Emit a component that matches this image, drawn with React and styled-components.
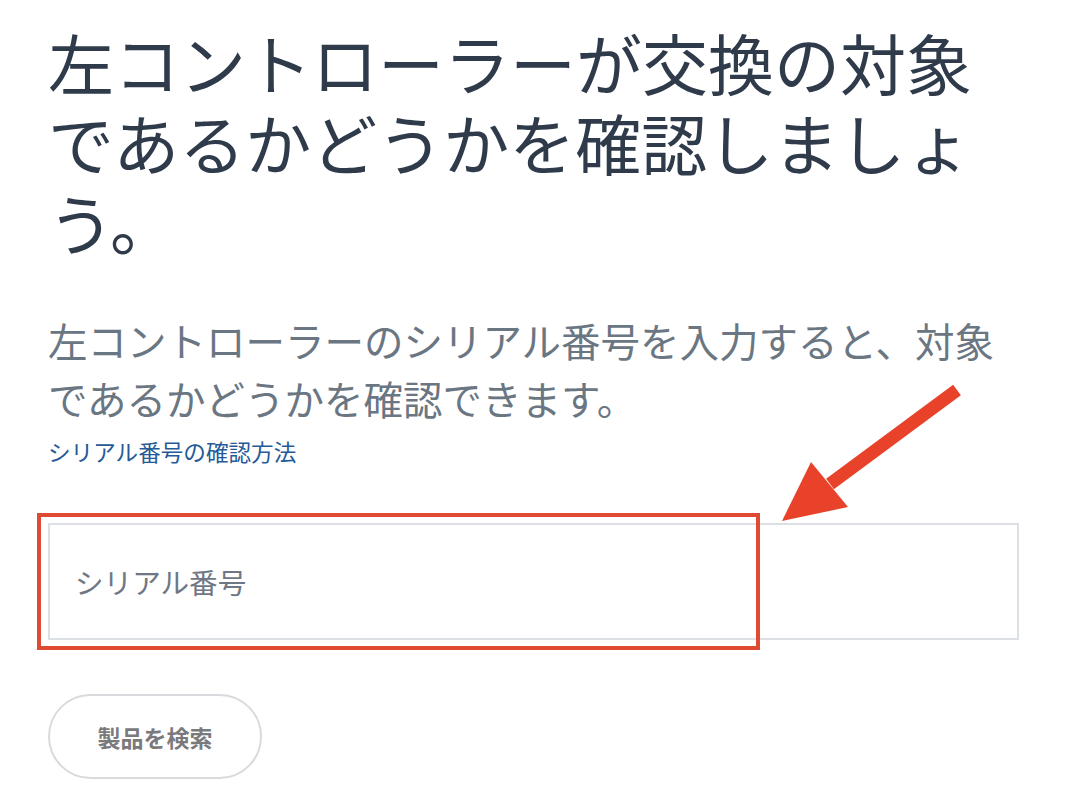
import styled, { createGlobalStyle } from 'styled-components';

const GlobalStyle = createGlobalStyle`
  html, body {
    margin: 0;
    padding: 0;
    background: #ffffff;
  }
  body {
    font-family: "Noto Sans CJK JP", "Noto Sans", sans-serif;
  }
`;

const Page = styled.main`
  width: 1080px;
  box-sizing: border-box;
  padding: 21px 61px 0 48px;
`;

const Title = styled.h1`
  margin: 0;
  font-size: 66px;
  line-height: 80px;
  font-weight: 400;
  color: #2f3b4a;
`;

const Lead = styled.p`
  margin: 50px 0 0;
  font-size: 39.5px;
  line-height: 58px;
  font-weight: 400;
  color: #6b7683;
`;

const HelpLink = styled.a`
  display: block;
  margin-top: 9px;
  font-size: 22.6px;
  line-height: 32px;
  color: #265a97;
  text-decoration: none;
`;

const Field = styled.div`
  position: relative;
  margin-top: 55px;
`;

const SerialInput = styled.input`
  display: block;
  width: 100%;
  height: 117px;
  box-sizing: border-box;
  padding: 0 25px;
  border: 2px solid #dcdfe3;
  border-radius: 0;
  outline: none;
  background: #fff;
  font-family: inherit;
  font-size: 28.6px;
  color: #2f3b4a;

  &::placeholder {
    color: #6f7784;
  }
`;

const Highlight = styled.div`
  position: absolute;
  left: -11px;
  top: -10px;
  width: 723px;
  height: 137px;
  box-sizing: border-box;
  border: 4.5px solid #df4a32;
  pointer-events: none;
`;

const Pointer = styled.svg`
  position: absolute;
  left: 682px;
  top: -143px;
  width: 240px;
  height: 150px;
  overflow: visible;
  pointer-events: none;
`;

const SearchButton = styled.button`
  display: block;
  margin-top: 54px;
  width: 214px;
  height: 85px;
  box-sizing: border-box;
  border: 2px solid #d9dadd;
  border-radius: 43px;
  background: #fff;
  font-family: inherit;
  font-size: 23px;
  font-weight: 700;
  color: #7a7a7c;
  cursor: pointer;
`;

const App = () => {
  return (
    <>
      <GlobalStyle />
      <Page>
        <Title>左コントローラーが交換の対象であるかどうかを確認しましょう。</Title>
        <Lead>左コントローラーのシリアル番号を入力すると、対象であるかどうかを確認できます。</Lead>
        <HelpLink href="#">シリアル番号の確認方法</HelpLink>
        <Field>
          <SerialInput type="text" placeholder="シリアル番号" />
          <Highlight />
          <Pointer viewBox="0 0 240 150">
            <line x1="227" y1="10" x2="100" y2="104" stroke="#e8432a" strokeWidth="13" />
            <polygon points="52,141 81,82 118,127" fill="#e8432a" />
          </Pointer>
        </Field>
        <SearchButton type="button">製品を検索</SearchButton>
      </Page>
    </>
  );
};

export default App;
